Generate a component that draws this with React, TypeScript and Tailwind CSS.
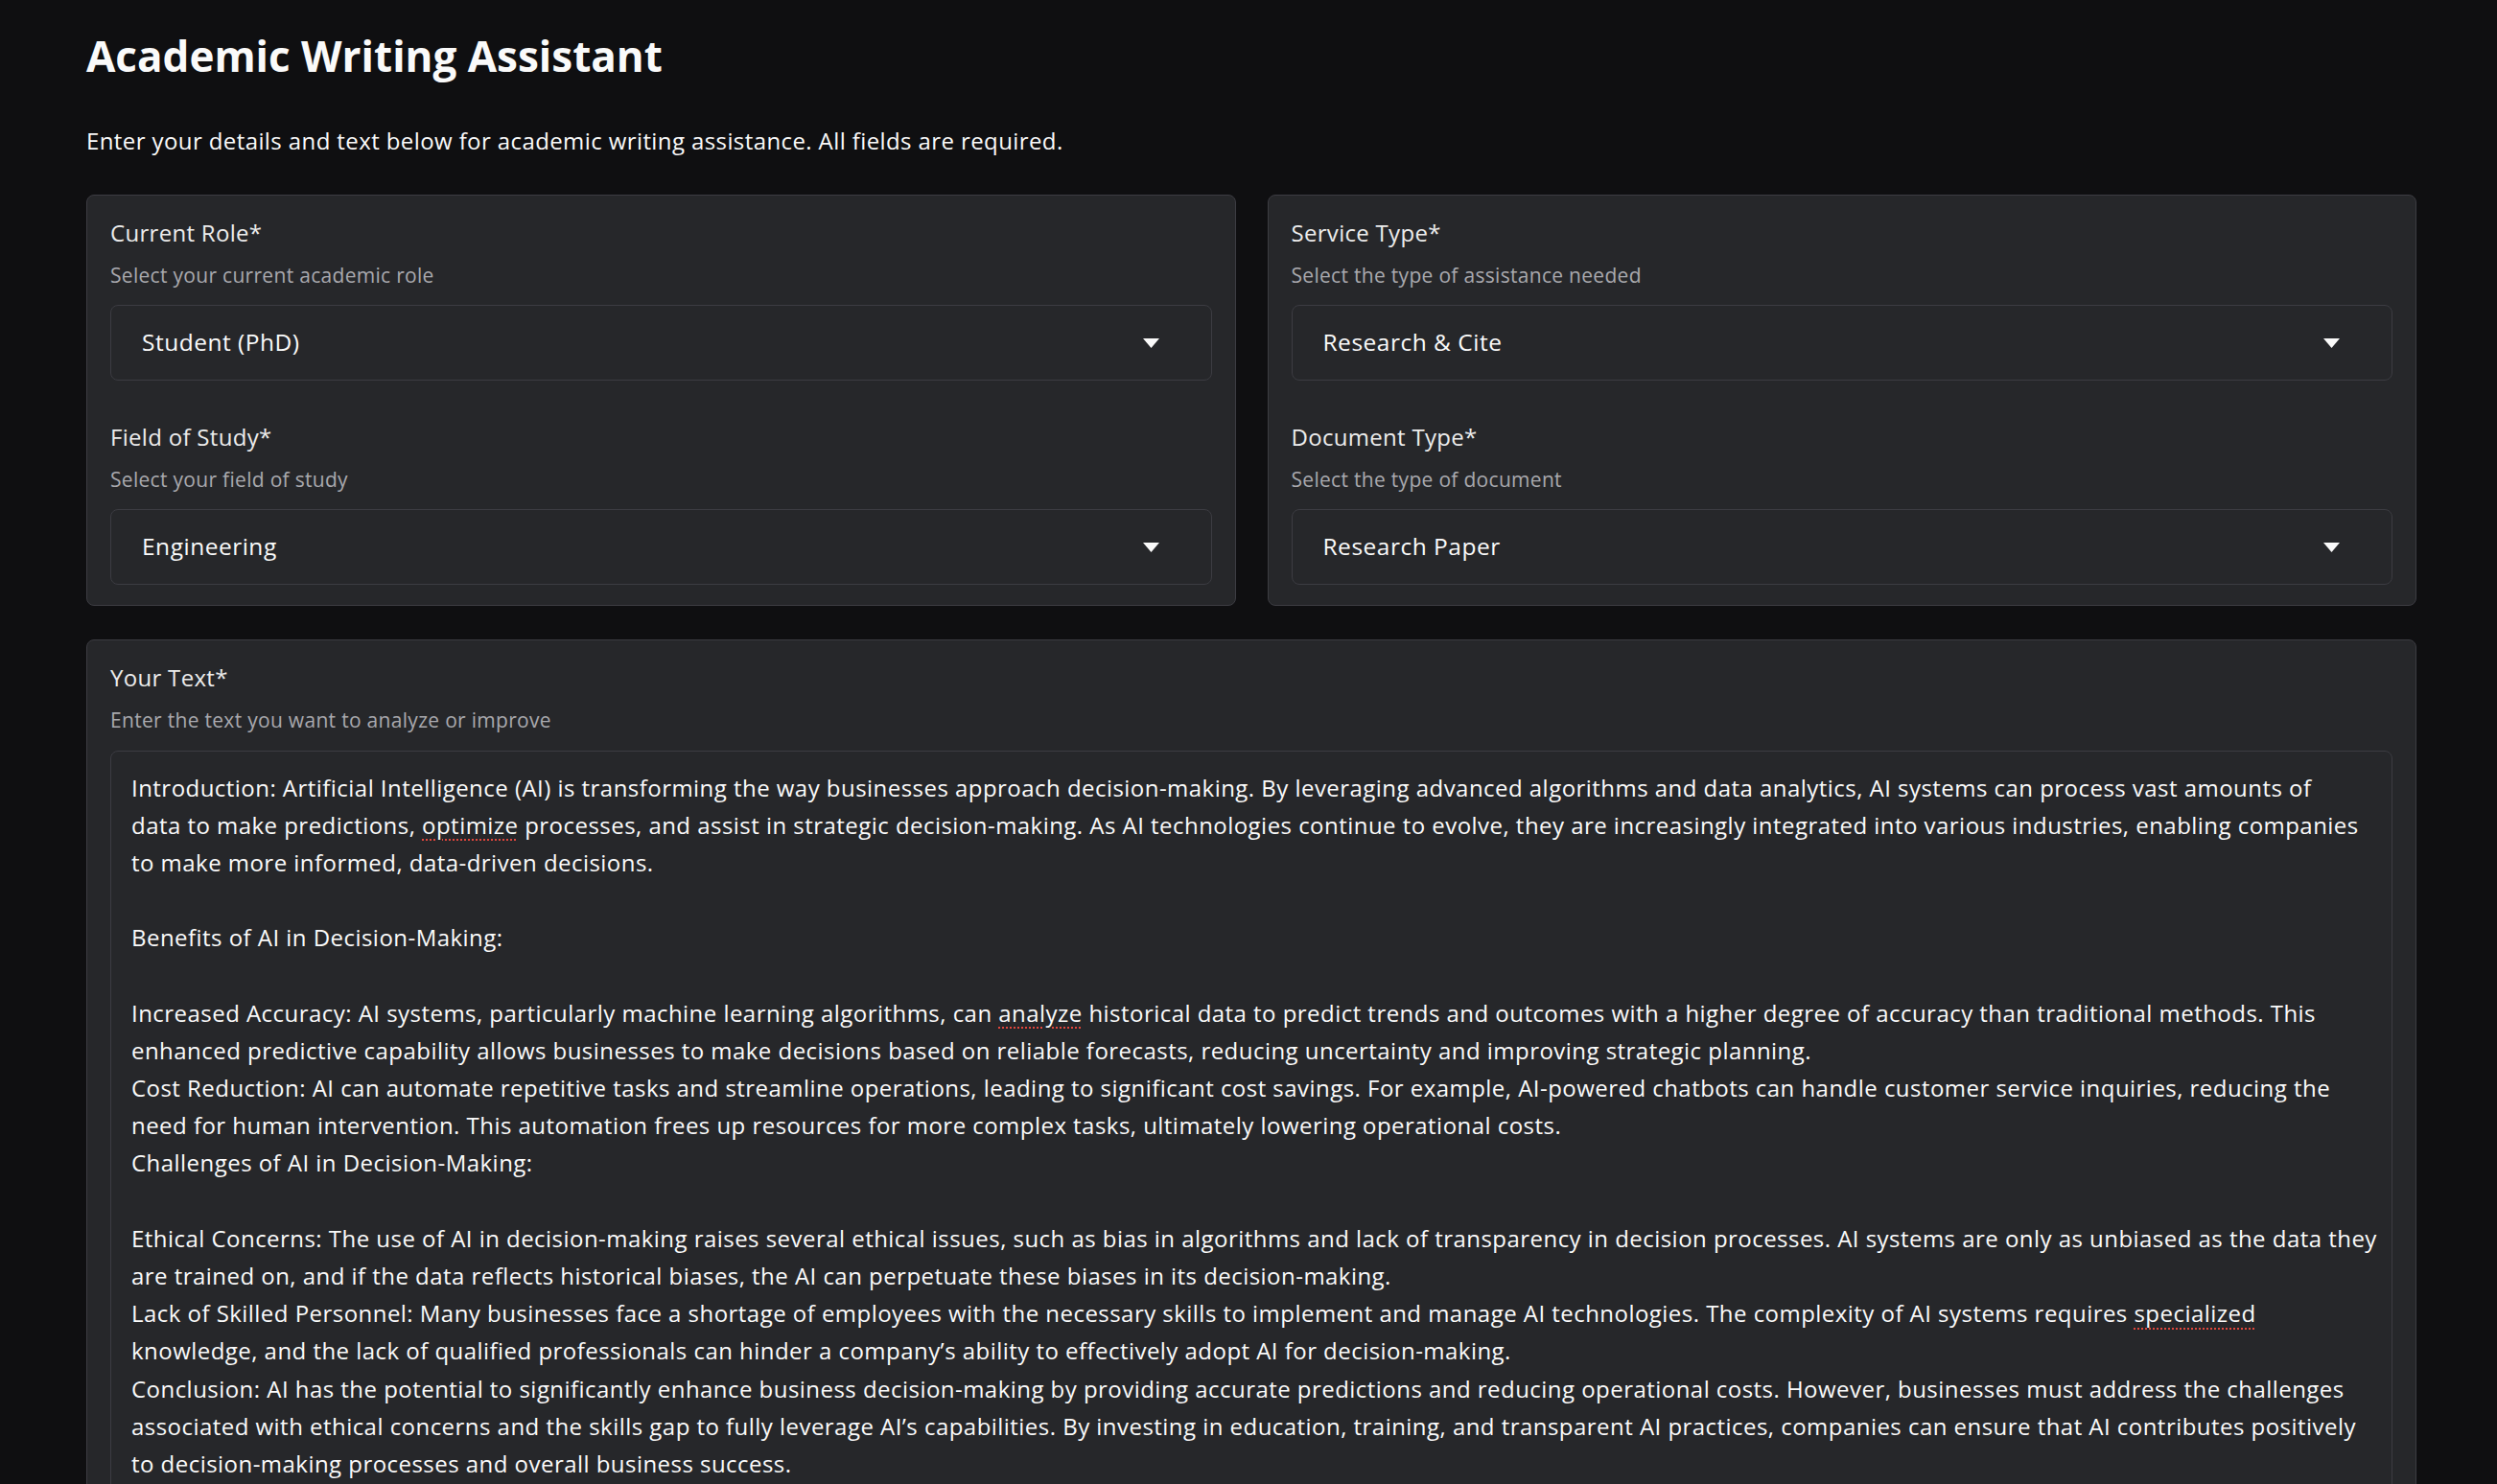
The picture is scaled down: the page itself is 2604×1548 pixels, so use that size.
import React from "react";

type Seg = string | { bad: string };

const textLines: Seg[][] = [
  ["Introduction: Artificial Intelligence (AI) is transforming the way businesses approach decision-making. By leveraging advanced algorithms and data analytics, AI systems can process vast amounts of"],
  ["data to make predictions, ", { bad: "optimize" }, " processes, and assist in strategic decision-making. As AI technologies continue to evolve, they are increasingly integrated into various industries, enabling companies"],
  ["to make more informed, data-driven decisions."],
  [""],
  ["Benefits of AI in Decision-Making:"],
  [""],
  ["Increased Accuracy: AI systems, particularly machine learning algorithms, can ", { bad: "analyze" }, " historical data to predict trends and outcomes with a higher degree of accuracy than traditional methods. This"],
  ["enhanced predictive capability allows businesses to make decisions based on reliable forecasts, reducing uncertainty and improving strategic planning."],
  ["Cost Reduction: AI can automate repetitive tasks and streamline operations, leading to significant cost savings. For example, AI-powered chatbots can handle customer service inquiries, reducing the"],
  ["need for human intervention. This automation frees up resources for more complex tasks, ultimately lowering operational costs."],
  ["Challenges of AI in Decision-Making:"],
  [""],
  ["Ethical Concerns: The use of AI in decision-making raises several ethical issues, such as bias in algorithms and lack of transparency in decision processes. AI systems are only as unbiased as the data they"],
  ["are trained on, and if the data reflects historical biases, the AI can perpetuate these biases in its decision-making."],
  ["Lack of Skilled Personnel: Many businesses face a shortage of employees with the necessary skills to implement and manage AI technologies. The complexity of AI systems requires ", { bad: "specialized" }],
  ["knowledge, and the lack of qualified professionals can hinder a company\u2019s ability to effectively adopt AI for decision-making."],
  ["Conclusion: AI has the potential to significantly enhance business decision-making by providing accurate predictions and reducing operational costs. However, businesses must address the challenges"],
  ["associated with ethical concerns and the skills gap to fully leverage AI\u2019s capabilities. By investing in education, training, and transparent AI practices, companies can ensure that AI contributes positively"],
  ["to decision-making processes and overall business success."],
];

const Chevron = () => (
  <svg width="17" height="10" viewBox="0 0 17 10" className="mt-[2px]">
    <path d="M0 0H17L8.5 10Z" fill="#fafafa" />
  </svg>
);

const Select = ({ value }: { value: string }) => (
  <div className="flex h-[79px] items-center justify-between rounded-lg border border-[#3c3c42] bg-[#26272a] pl-8 pr-[54px]">
    <span className="text-[24.5px] tracking-[0.5px] text-[#fafafa]">{value}</span>
    <Chevron />
  </div>
);

const Label = ({ label, help }: { label: string; help: string }) => (
  <>
    <div className="h-[30px] text-[24px] leading-[30px] tracking-[0.3px] text-[#ececec]">{label}</div>
    <div className="mt-[15px] h-[28px] text-[21px] leading-[28px] tracking-[0.3px] text-[#a9a9ae]">{help}</div>
  </>
);

const Field = ({ label, help, value }: { label: string; help: string; value: string }) => (
  <div className="flex flex-col">
    <Label label={label} help={help} />
    <div className="mt-[17px]">
      <Select value={value} />
    </div>
  </div>
);

const Card = ({ children }: { children: React.ReactNode }) => (
  <div className="rounded-lg border border-[#3c3c42] bg-[#26272a] px-6 pb-[21px] pt-6">{children}</div>
);

export default function App() {
  return (
    <div className="min-h-screen bg-[#0f0f11] pl-[90px] pr-[84px] pt-[33px] font-['Open_Sans',sans-serif] text-[#fafafa]">
      <h1 className="text-[44px] font-bold leading-[51.6px]">Academic Writing Assistant</h1>
      <p className="mt-[42px] text-[24px] leading-[39px] tracking-[0.4px]">
        Enter your details and text below for academic writing assistance. All fields are required.
      </p>

      <div className="mt-[37px] grid grid-cols-2 gap-[33px]">
        <Card>
          <div className="flex flex-col gap-[44px]">
            <Field label="Current Role*" help="Select your current academic role" value="Student (PhD)" />
            <Field label="Field of Study*" help="Select your field of study" value="Engineering" />
          </div>
        </Card>
        <Card>
          <div className="flex flex-col gap-[44px]">
            <Field label="Service Type*" help="Select the type of assistance needed" value="Research & Cite" />
            <Field label="Document Type*" help="Select the type of document" value="Research Paper" />
          </div>
        </Card>
      </div>

      <div className="mt-[35px]">
        <Card>
          <Label label="Your Text*" help="Enter the text you want to analyze or improve" />
          <div className="mt-[18px] overflow-hidden rounded-lg border border-[#3c3c42] bg-[#26272a] px-[21px] pb-[18px] pt-[18px]">
            {textLines.map((line, i) => (
              <div key={i} className="h-[39.2px] whitespace-pre text-[24px] leading-[39.2px] tracking-[0.46px] text-[#fafafa]">
                {line.map((s, j) =>
                  typeof s === "string" ? (
                    <span key={j}>{s}</span>
                  ) : (
                    <span
                      key={j}
                      className="underline decoration-[#e0463c] decoration-dotted decoration-2 underline-offset-[6px]"
                    >
                      {s.bad}
                    </span>
                  )
                )}
              </div>
            ))}
          </div>
        </Card>
      </div>
    </div>
  );
}
